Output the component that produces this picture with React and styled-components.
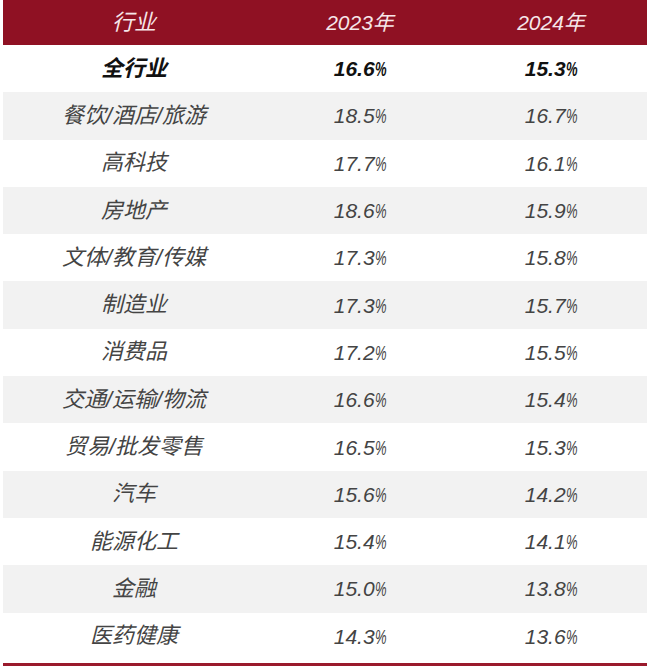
import React from "react";
import styled, { createGlobalStyle } from "styled-components";

const GlobalStyle = createGlobalStyle`
  html, body {
    margin: 0;
    padding: 0;
    background: #ffffff;
  }
  body {
    font-family: "Liberation Sans", "Noto Sans CJK SC", sans-serif;
  }
`;

const Page = styled.div`
  width: 650px;
  height: 667px;
  padding: 0 3px 0 3px;
  box-sizing: border-box;
  background: #fff;
`;

const Table = styled.div`
  display: flex;
  flex-direction: column;
  border-bottom: 3px solid #9a1a2c;
  padding-bottom: 3px;
`;

const Row = styled.div`
  display: grid;
  grid-template-columns: 262px 190px 1fr;
  align-items: center;
  height: ${(p) => (p.$header ? "45px" : "47.3px")};
  background: ${(p) => (p.$header ? "#8f1123" : p.$shade ? "#f2f2f2" : "#ffffff")};
`;

const Cell = styled.div`
  text-align: center;
  font-style: italic;
  font-size: ${(p) => (p.$label ? "22px" : "21px")};
  line-height: 1;
  font-family: "Liberation Sans", "Noto Sans CJK SC", sans-serif;
  color: ${(p) => (p.$header ? "#f6e6e9" : p.$bold ? "#111111" : "#444444")};
  font-weight: ${(p) => (p.$bold ? 700 : 400)};
`;

const Pct = styled.span`
  display: inline-block;
  transform: scaleX(0.62);
  transform-origin: left center;
  margin-right: -7px;
`;

const rows = [
  ["餐饮/酒店/旅游", "18.5", "16.7"],
  ["高科技", "17.7", "16.1"],
  ["房地产", "18.6", "15.9"],
  ["文体/教育/传媒", "17.3", "15.8"],
  ["制造业", "17.3", "15.7"],
  ["消费品", "17.2", "15.5"],
  ["交通/运输/物流", "16.6", "15.4"],
  ["贸易/批发零售", "16.5", "15.3"],
  ["汽车", "15.6", "14.2"],
  ["能源化工", "15.4", "14.1"],
  ["金融", "15.0", "13.8"],
  ["医药健康", "14.3", "13.6"],
];

const Value = ({ v, bold }) => (
  <Cell $bold={bold}>
    {v}
    <Pct>%</Pct>
  </Cell>
);

export default function App() {
  return (
    <Page>
      <GlobalStyle />
      <Table>
        <Row $header>
          <Cell $header $label>行业</Cell>
          <Cell $header>2023年</Cell>
          <Cell $header>2024年</Cell>
        </Row>
        <Row>
          <Cell $bold $label>全行业</Cell>
          <Value v="16.6" bold />
          <Value v="15.3" bold />
        </Row>
        {rows.map((r, i) => (
          <Row key={r[0]} $shade={i % 2 === 0}>
            <Cell $label>{r[0]}</Cell>
            <Value v={r[1]} />
            <Value v={r[2]} />
          </Row>
        ))}
      </Table>
    </Page>
  );
}
